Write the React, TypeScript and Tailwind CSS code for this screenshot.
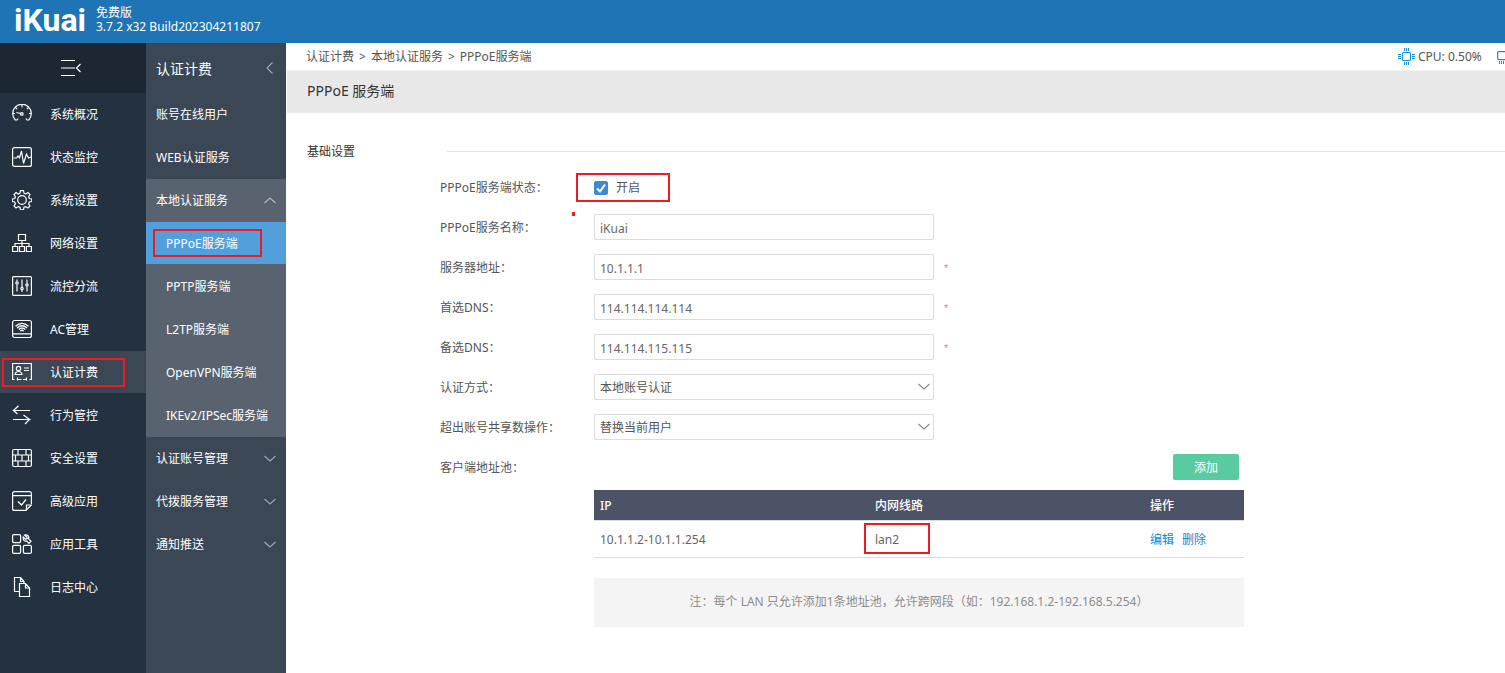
import { useState } from "react";
import type { ReactNode } from "react";

const Icon = ({ children }: { children: ReactNode }) => (
  <svg
    viewBox="0 0 20 20"
    className="w-5 h-5 shrink-0"
    fill="none"
    stroke="currentColor"
    strokeWidth="1.2"
    aria-hidden="true"
  >
    {children}
  </svg>
);

const Chevron = ({ className = "", d }: { className?: string; d: string }) => (
  <svg
    viewBox="0 0 12 12"
    className={`w-3 h-3 shrink-0 ${className}`}
    fill="none"
    stroke="currentColor"
    strokeWidth="1.1"
    aria-hidden="true"
  >
    <path d={d} />
  </svg>
);

const UP = "M.5 8 6 3l5.500 5";
const DOWN = "M.5 3 6 8l5.500-5";
const LEFT = "M8.500.5 3 6l5.500 5.500";

// Red frame around a highlighted item
const Mark = ({ className }: { className: string }) => (
  <span
    className={`absolute border-2 border-[#ed1c24] pointer-events-none ${className}`}
  />
);

const mainNav = [
  {
    name: "系统概况",
    icon: (
      <Icon>
        <path d="M6.200 14.500 5 16H3.300A9.300 9.300 0 1 1 16.700 16H15l-1.200-1.500" />
        <path d="M10 .8v2.400M3.500 3.500l1.500 1.500M16.500 3.500 15 5M.8 9.500H3M17 9.500h2.200M4.500 8.500l4 1" />
        <circle cx="9.800" cy="9.900" r="1.300" />
      </Icon>
    ),
  },
  {
    name: "状态监控",
    icon: (
      <Icon>
        <rect x=".6" y=".6" width="18.800" height="18.800" rx="2" />
        <path d="M1.500 11h3L6 9l1.500 2L9.500 4l2 12.500 3-9.500 2 4 2.500-1" />
      </Icon>
    ),
  },
  {
    name: "系统设置",
    icon: (
      <Icon>
        <circle cx="10" cy="10" r="4.300" />
        <path d="M8.500.7h3l.5 2.500 1.800.8 2.200-1.500 2 2-1.400 2.200.7 1.800 2.500.5v2.500l-2.500.5-.7 1.900 1.400 2.100-2 2-2.200-1.400-1.800.7-.5 2.500h-3l-.5-2.500-1.800-.7L4 18l-2-2 1.400-2.100-.7-1.900-2.400-.5V9l2.400-.5.7-1.800L2 4.500l2-2L6.200 4 8 3.200z" />
      </Icon>
    ),
  },
  {
    name: "网络设置",
    icon: (
      <Icon>
        <path d="M6.500 1.500h7v6h-7zM.6 13.500h5v5h-5zM7.500 13.500h5v5h-5zM14.400 13.500h5v5h-5zM10 7.500v6M3 13.500v-3h14v3" />
      </Icon>
    ),
  },
  {
    name: "流控分流",
    icon: (
      <Icon>
        <rect x=".6" y=".6" width="18.800" height="18.800" rx="1" />
        <path d="M5 3.500v2M5 8.500v7M10 3.500V11M10 14v2M15 3.500v4M15 10.500v5" />
        <circle cx="5" cy="7" r="1.200" />
        <circle cx="10" cy="12.500" r="1.200" />
        <circle cx="15" cy="9" r="1.200" />
      </Icon>
    ),
  },
  {
    name: "AC管理",
    icon: (
      <Icon>
        <rect x=".6" y="1.500" width="18.800" height="17" rx="2" />
        <path d="M.6 14.800h18.800M3.500 7.300q6.500-6 13 0M5 9q5-4.500 10 0M6.700 10.500q3.300-3 6.600 0M8.300 12q1.700-1.500 3.400 0" />
      </Icon>
    ),
  },
  {
    name: "认证计费",
    icon: (
      <Icon>
        <path d="M2.500 17.500H.6v-16h18.800v16h-1.900M5.500 15.500v3M14.500 15.500v3M5.500 17.500h4M11 17.500h3.500" />
        <path d="M12 6h5M12 8.500h5M3 12.500c0-2 1.200-2.500 2.500-3h2c1.300.5 2.500 1 2.500 3z" />
        <circle cx="6.500" cy="6.500" r="2.200" />
      </Icon>
    ),
  },
  {
    name: "行为管控",
    icon: (
      <Icon>
        <path d="M18 5.500H1.500L6.500.8M1.500 5.500l4 3.500M1 14.500H17.500l-6-4.500M17.500 14.500 13 19" />
      </Icon>
    ),
  },
  {
    name: "安全设置",
    icon: (
      <Icon>
        <rect x=".6" y="1.500" width="18.800" height="17" rx="1.500" />
        <path d="M.6 7h18.800M.6 13h18.800M6 1.500V7M14 1.500V7M10 7v6M3.500 7v6M16.500 7v6M6 13v5.500M14 13v5.500" />
      </Icon>
    ),
  },
  {
    name: "高级应用",
    icon: (
      <Icon>
        <path d="M19.400 13V2.600a2 2 0 0 0-2-2H2.600a2 2 0 0 0-2 2v14.800a2 2 0 0 0 2 2H14l5.400-5.400H14.500v5M.6 4.600h18.800M6 10.500l3.500 3.500 4.500-5.500" />
      </Icon>
    ),
  },
  {
    name: "应用工具",
    icon: (
      <Icon>
        <rect x=".6" y=".6" width="8" height="8" rx="1.300" />
        <rect x=".6" y="11.400" width="8" height="8" rx="1.300" />
        <rect x="11.400" y="11.400" width="8" height="8" rx="1.300" />
        <path d="m12.500 1 3 3-1.800 1.500-2.500-2.500c-.5 3 1.300 4.700 3.500 4l2.300 2.300 2-2-2.500-2.500c1-2.300-1-4.500-4-3.800z" />
      </Icon>
    ),
  },
  {
    name: "日志中心",
    icon: (
      <Icon>
        <path d="M7 14.500H2.500V.5h6l3.500 4v1.500M8.500.5v4H12M7.500 6.500h6l4 4.500v8.500h-10zM13.500 6.500V11h4" />
      </Icon>
    ),
  },
];

const subNav = [
  { name: "账号在线用户" },
  { name: "WEB认证服务" },
  {
    name: "本地认证服务",
    children: [
      "PPPoE服务端",
      "PPTP服务端",
      "L2TP服务端",
      "OpenVPN服务端",
      "IKEv2/IPSec服务端",
    ],
  },
  { name: "认证账号管理", folded: true },
  { name: "代拨服务管理", folded: true },
  { name: "通知推送", folded: true },
];

const Row = ({
  label,
  id,
  children,
}: {
  label: string;
  id: string;
  children: ReactNode;
}) => (
  <div className="flex items-center h-10">
    <label htmlFor={id} className="w-[154px] shrink-0 pt-0.5">
      {label}：
    </label>
    {children}
  </div>
);

const TextRow = ({
  label,
  id,
  value,
  required,
}: {
  label: string;
  id: string;
  value: string;
  required?: boolean;
}) => (
  <Row label={label} id={id}>
    <input
      id={id}
      type="text"
      defaultValue={value}
      className="w-[340px] h-[26px] px-[5px] pt-0.5 border border-[#dcdcdc] rounded-xs text-[#666] outline-none"
    />
    {required && (
      <span className="ml-2.5 pt-0.5 text-[11px] text-[#dd8085] font-[family-name:Liberation_Sans]">
        *
      </span>
    )}
  </Row>
);

const SelectRow = ({
  label,
  id,
  value,
}: {
  label: string;
  id: string;
  value: string;
}) => (
  <Row label={label} id={id}>
    <div className="relative w-[340px]">
      <select
        id={id}
        className="block w-full h-[26px] px-[5px] pt-0.5 border border-[#dcdcdc] rounded-xs bg-white appearance-none outline-none"
      >
        <option>{value}</option>
      </select>
      <Chevron
        d={DOWN}
        className="absolute right-1 top-[7px] text-[#888] pointer-events-none"
      />
    </div>
  </Row>
);

const App = () => {
  const [enabled, setEnabled] = useState(true);

  return (
    <div className="flex flex-col min-h-screen bg-white text-xs text-[#555] font-['Noto_Sans','Noto_Sans_CJK_SC',sans-serif]">
      {/* Top bar */}
      <header className="flex items-center h-[43px] px-3.5 pb-1 gap-3 bg-[#1e74b5] text-white">
        <span className="w-[70px] text-[32px] leading-8 font-bold font-[family-name:Roboto,sans-serif]">
          iKuai
        </span>
        <div className="leading-[14px]">
          <p>免费版</p>
          <p>3.7.2 x32 Build202304211807</p>
        </div>
      </header>

      <div className="flex flex-1">
        {/* Main menu */}
        <nav className="w-[146px] shrink-0 bg-[#233140] text-white">
          <button
            type="button"
            aria-label="收起菜单"
            className="flex items-center justify-center w-full h-[50px] pr-1 bg-[#1c2733]"
          >
            <svg
              viewBox="0 0 22 18"
              className="w-[22px] h-[18px]"
              fill="none"
              stroke="currentColor"
              aria-hidden="true"
            >
              <path d="M1 1.500h14M1 16.500h14" />
              <path d="M1 9h14" stroke="#8e939a" strokeWidth="2" />
              <path d="M20.500 5l-4 4 4 4" strokeWidth="1.200" />
            </svg>
          </button>
          <ul>
            {mainNav.map((item) => (
              <li key={item.name} className="relative mb-px">
                <a
                  href="#"
                  className={`flex items-center h-[42px] pl-3 gap-[18px] ${
                    item.name === "认证计费" ? "bg-[#3b4755]" : ""
                  }`}
                >
                  {item.icon}
                  <span className="pt-0.5">{item.name}</span>
                </a>
                {item.name === "认证计费" && (
                  <Mark className="left-0.5 top-[7px] w-[123px] h-[29px]" />
                )}
              </li>
            ))}
          </ul>
        </nav>

        {/* Second level menu */}
        <nav className="w-[140px] shrink-0 bg-[#3b4755] text-white">
          <div className="flex items-center justify-between h-[50px] px-2.5 text-sm">
            <span className="pt-0.5">认证计费</span>
            <Chevron d={LEFT} className="text-[#a3a9b0]" />
          </div>
          <ul>
            {subNav.map((item) => (
              <li key={item.name} className={item.children && "bg-[#59636f]"}>
                <a
                  href="#"
                  className="flex items-center justify-between h-[43px] px-2.5"
                >
                  {item.name}
                  {item.children && (
                    <Chevron d={UP} className="text-[#b4b9be]" />
                  )}
                  {item.folded && (
                    <Chevron d={DOWN} className="text-[#a3a9b0]" />
                  )}
                </a>
                {item.children && (
                  <ul>
                    {item.children.map((child, i) => (
                      <li key={child} className="relative pb-px">
                        <a
                          href="#"
                          className={`flex items-center h-[42px] pt-0.5 pl-5 whitespace-nowrap ${
                            i === 0 ? "bg-[#529fdb]" : ""
                          }`}
                        >
                          {child}
                        </a>
                        {i === 0 && (
                          <Mark className="left-[7px] top-[7px] w-[109px] h-7" />
                        )}
                      </li>
                    ))}
                  </ul>
                )}
              </li>
            ))}
          </ul>
        </nav>

        {/* Content */}
        <main className="flex-1 min-w-0">
          <div className="flex items-center justify-between h-7 pl-5 border-b border-[#f0f0f0]">
            <div className="flex gap-[5px]">
              <a href="#">认证计费</a>
              <span>&gt;</span>
              <a href="#">本地认证服务</a>
              <span>&gt;</span>
              <span>PPPoE服务端</span>
            </div>
            <div className="flex items-center w-[107px] overflow-hidden whitespace-nowrap">
              <svg
                viewBox="0 0 18 18"
                className="w-[18px] h-[18px] mr-0.5 shrink-0"
                fill="none"
                stroke="#1a8fcf"
                aria-hidden="true"
              >
                <rect x="4.500" y="4.500" width="8" height="8" rx="1" strokeWidth="1.200" />
                <path d="M6.500 0v3M8.500 0v3M10.500 0v3M6.500 14v3M8.500 14v3M10.500 14v3M0 6.500h3M0 8.500h3M0 10.500h3M14 6.500h3M14 8.500h3M14 10.500h3" />
              </svg>
              <span className="w-[79px] shrink-0">CPU: 0.50%</span>
              <svg
                viewBox="0 0 18 18"
                className="w-[18px] h-[18px] shrink-0"
                fill="none"
                stroke="#1a8fcf"
                aria-hidden="true"
              >
                <rect x=".6" y="3.600" width="16.800" height="8" rx="1" strokeWidth="1.200" />
                <path d="M2.500 13v3M4.500 13v3M6.500 13v3M10.500 13v3M12.500 13v3M14.500 13v3" />
              </svg>
            </div>
          </div>

          <h1 className="flex items-center h-[42px] ml-px pl-5 pb-0.5 text-sm text-[#333] bg-[#e8e8e8]">
            PPPoE 服务端
          </h1>

          <section className="pt-7 pb-10">
            <div className="flex items-center h-5 pl-[21px] mb-1.5">
              <h2 className="w-[140px] pt-0.5 text-[#333]">基础设置</h2>
              <div className="flex-1 h-px bg-[#e4e4e4]" />
            </div>

            <form
              className="pl-[154px]"
              onSubmit={(e) => e.preventDefault()}
            >
              <Row label="PPPoE服务端状态" id="status">
                <div className="relative">
                  <label className="flex items-center gap-2 pt-0.5">
                    <input
                      id="status"
                      type="checkbox"
                      checked={enabled}
                      onChange={(e) => setEnabled(e.target.checked)}
                      className="peer w-3.5 h-3.5 appearance-none rounded-xs border border-[#3d8ad3] checked:bg-[#3d8ad3]"
                    />
                    <svg
                      viewBox="0 0 14 14"
                      className="absolute left-0 w-3.5 h-3.5 hidden peer-checked:block pointer-events-none"
                      fill="none"
                      stroke="#fff"
                      strokeWidth="2"
                      aria-hidden="true"
                    >
                      <path d="M3 7.500 6 10.500 11 3.500" />
                    </svg>
                    开启
                  </label>
                  <Mark className="-left-[18px] -top-[5px] w-[94px] h-[29px]" />
                  <span className="absolute -left-[22px] top-[34px] w-[3px] h-1 bg-[#ed1c24]" />
                </div>
              </Row>
              <TextRow label="PPPoE服务名称" id="name" value="iKuai" />
              <TextRow label="服务器地址" id="server" value="10.1.1.1" required />
              <TextRow label="首选DNS" id="dns1" value="114.114.114.114" required />
              <TextRow label="备选DNS" id="dns2" value="114.114.115.115" required />
              <SelectRow label="认证方式" id="auth" value="本地账号认证" />
              <SelectRow label="超出账号共享数操作" id="share" value="替换当前用户" />

              <div className="max-w-[804px]">
                <div className="flex items-center justify-between h-10 pr-[5px]">
                  <span className="pt-0.5">客户端地址池：</span>
                  <button
                    type="button"
                    className="w-[66px] h-[26px] pt-0.5 rounded-xs bg-[#5acba1] text-white"
                  >
                    添加
                  </button>
                </div>

                <div className="pl-[154px] pt-[3px]">
                  <table className="w-full table-fixed text-left">
                    <thead className="bg-[#4d5366] text-white">
                      <tr className="h-[30px]">
                        <th className="w-[275px] pl-1.5 pt-0.5 font-medium">IP</th>
                        <th className="w-[275px] pl-1.5 pt-0.5 font-medium">内网线路</th>
                        <th className="pl-1.5 pt-0.5 font-medium">操作</th>
                      </tr>
                    </thead>
                    <tbody>
                      <tr className="h-[37px] border-y border-[#dcdcdc] text-[#666]">
                        <td className="pl-1.5 pt-0.5">10.1.1.2-10.1.1.254</td>
                        <td className="relative pl-1.5 pt-0.5">
                          lan2
                          <Mark className="-left-[5px] top-0.5 w-[66px] h-[31px]" />
                        </td>
                        <td className="pl-1.5 pt-0.5 text-[#1289d0]">
                          <a href="#" className="mr-2">
                            编辑
                          </a>
                          <a href="#">删除</a>
                        </td>
                      </tr>
                    </tbody>
                  </table>
                  <p className="mt-5 h-[49px] leading-[48px] text-center bg-[#f4f4f4] text-[#8c8c8c]">
                    注：每个 LAN 只允许添加1条地址池，允许跨网段（如：192.168.1.2-192.168.5.254）
                  </p>
                </div>
              </div>
            </form>
          </section>
        </main>
      </div>
    </div>
  );
};

export default App;
